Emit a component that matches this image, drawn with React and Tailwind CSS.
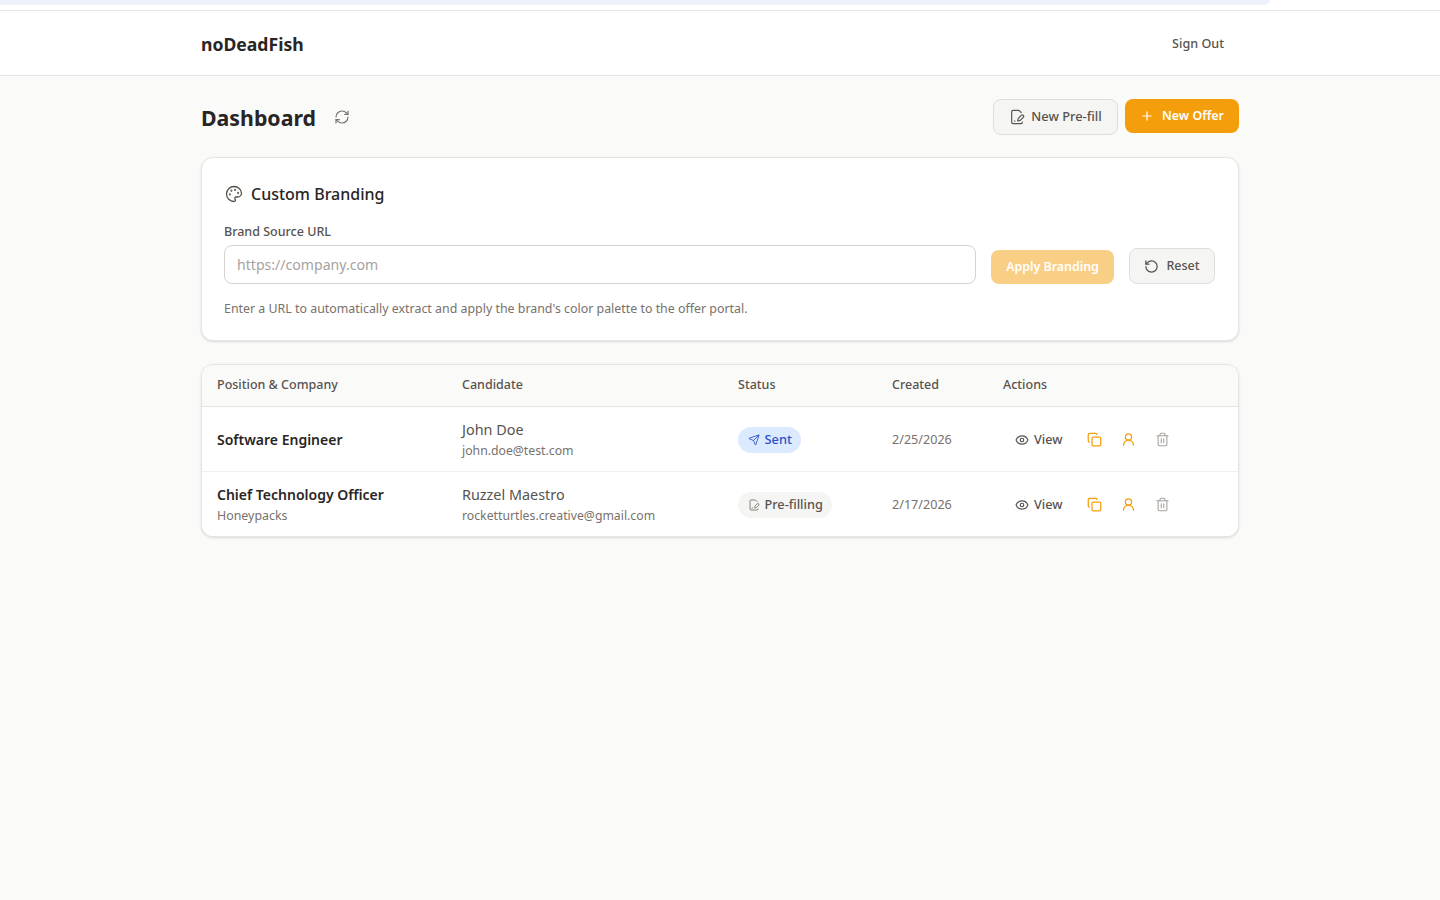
import React from "react";
import { RefreshCw, FilePenLine, Plus, Palette, RotateCcw, Send, Eye, Copy, UserRound, Trash2 } from "lucide-react";

const rows = [
  { title: "Software Engineer", company: "", name: "John Doe", email: "john.doe@test.com", status: "sent", date: "2/25/2026" },
  { title: "Chief Technology Officer", company: "Honeypacks", name: "Ruzzel Maestro", email: "rocketturtles.creative@gmail.com", status: "pre", date: "2/17/2026" },
];

function Row({ r, last }) {
  return (
    <div className={"flex items-center bg-white pt-[2px] " + (last ? "h-[64px]" : "h-[65px] border-b border-[#f1f0ee]")}>
      <div className="w-[260px] pl-[15px]">
        <div className="text-[14px] leading-[20px] font-semibold text-[#292524]">{r.title}</div>
        {r.company && <div className="text-[12.4px] leading-[21px] text-[#78716c]">{r.company}</div>}
      </div>
      <div className="w-[276px]">
        <div className="text-[14.4px] leading-[20px] text-[#57534e]">{r.name}</div>
        <div className="text-[12.25px] leading-[21px] text-[#78716c]">{r.email}</div>
      </div>
      <div className="w-[154px]">
        {r.status === "sent" ? (
          <span className="inline-flex h-[26px] items-center gap-[5px] rounded-full bg-[#dbeafe] px-[9.5px] text-[12.8px] font-medium text-[#2b50c8]">
            <Send size={12} strokeWidth={1.75} />Sent
          </span>
        ) : (
          <span className="inline-flex h-[26px] items-center gap-[5px] rounded-full bg-[#f5f5f4] px-[9.5px] text-[12.7px] font-medium text-[#57534e]">
            <FilePenLine size={12} strokeWidth={1.75} className="text-[#78716c]" />Pre-filling
          </span>
        )}
      </div>
      <div className="w-[122px] text-[12.6px] text-[#78716c]">{r.date}</div>
      <div className="flex flex-1 items-center">
        <span className="ml-[1px] inline-flex items-center gap-[5px] text-[12.7px] font-medium text-[#57534e]">
          <Eye size={14} strokeWidth={2} />View
        </span>
        <Copy size={15} strokeWidth={2} className="ml-[24px] text-[#f59e0b]" />
        <UserRound size={15} strokeWidth={2} className="ml-[19px] text-[#f59e0b]" />
        <Trash2 size={15} strokeWidth={1.75} className="ml-[19px] text-[#a8a29e]" />
      </div>
    </div>
  );
}

export default function App() {
  return (
    <div className="min-h-[900px] bg-[#fafaf9] font-['Noto_Sans',sans-serif] text-[#292524]">
      <div className="h-[11px] border-b border-[#e7e5e4] bg-white">
        <div className="h-[5px] w-[1270px] rounded-br-[10px] bg-[#edf2fa]" />
      </div>
      <header className="h-[65px] border-b border-[#e7e5e4] bg-white">
        <div className="mx-auto flex h-full w-[1040px] items-center justify-between pt-[2px] pl-[1px] pr-[16px]">
          <div className="text-[17.6px] font-bold text-[#292524]">noDeadFish</div>
          <div className="text-[12.6px] font-medium text-[#57534e]">Sign Out</div>
        </div>
      </header>
      <main className="mx-auto w-[1040px] pt-[23px]">
        <div className="flex h-[36px] items-center justify-between">
          <div className="flex items-center pl-[1px]">
            <h1 className="pt-[2px] text-[21.3px] font-bold text-[#292524]">Dashboard</h1>
            <RefreshCw size={16} strokeWidth={1.75} className="ml-[18px] text-[#78716c]" />
          </div>
          <div className="flex items-start gap-[7px] pr-[1px]">
            <button className="flex h-[36px] w-[125px] items-center justify-center gap-[6px] rounded-[8px] border border-[#e0dedc] bg-[#f5f5f4] text-[12.9px] font-medium text-[#57534e]">
              <FilePenLine size={16} strokeWidth={1.75} />New Pre-fill
            </button>
            <button className="flex h-[34px] w-[114px] items-center justify-center gap-[8px] rounded-[8px] bg-[#f59e0b] text-[12.4px] font-semibold text-white">
              <Plus size={14} strokeWidth={2} />New Offer
            </button>
          </div>
        </div>
        <section className="mx-[1px] mt-[22px] h-[184px] rounded-[12px] border border-[#e7e5e4] bg-white px-[22px] pt-[24px] shadow-sm">
          <div className="flex items-center gap-[8px] pl-[1px]">
            <Palette size={18} strokeWidth={1.75} className="text-[#57534e]" />
            <h2 className="text-[16px] leading-[24px] font-medium text-[#292524]">Custom Branding</h2>
          </div>
          <div className="mt-[18px] text-[12.5px] leading-[16px] font-medium text-[#57534e]">Brand Source URL</div>
          <div className="mt-[5px] flex items-start">
            <div className="flex h-[39px] w-[752px] items-center rounded-[8px] border border-[#d6d3d1] px-[12px] text-[14.1px] text-[#a8a29e]">https://company.com</div>
            <button className="mt-[5px] ml-[15px] h-[34px] w-[123px] rounded-[8px] bg-[#f9cf85] pt-[1px] text-[12.4px] font-semibold text-white">Apply Branding</button>
            <button className="mt-[3px] ml-[15px] flex h-[36px] w-[86px] items-center justify-center gap-[7px] rounded-[8px] border border-[#e0dedc] bg-[#f5f5f4] pt-[1px] text-[12.5px] font-medium text-[#57534e]">
              <RotateCcw size={15} strokeWidth={2} />Reset
            </button>
          </div>
          <p className="mt-[17px] text-[12.4px] leading-[16px] text-[#78716c]">Enter a URL to automatically extract and apply the brand's color palette to the offer portal.</p>
        </section>
        <section className="mx-[1px] mt-[23px] overflow-hidden rounded-[12px] border border-[#e7e5e4] bg-white shadow-sm">
          <div className="flex h-[42px] items-center border-b border-[#e7e5e4] bg-[#fafaf9] text-[12.5px] font-medium text-[#57534e]">
            <div className="w-[260px] pl-[15px]">Position &amp; Company</div>
            <div className="w-[276px]">Candidate</div>
            <div className="w-[154px]">Status</div>
            <div className="w-[111px]">Created</div>
            <div>Actions</div>
          </div>
          {rows.map((r, i) => <Row key={r.title} r={r} last={i === rows.length - 1} />)}
        </section>
      </main>
    </div>
  );
}
